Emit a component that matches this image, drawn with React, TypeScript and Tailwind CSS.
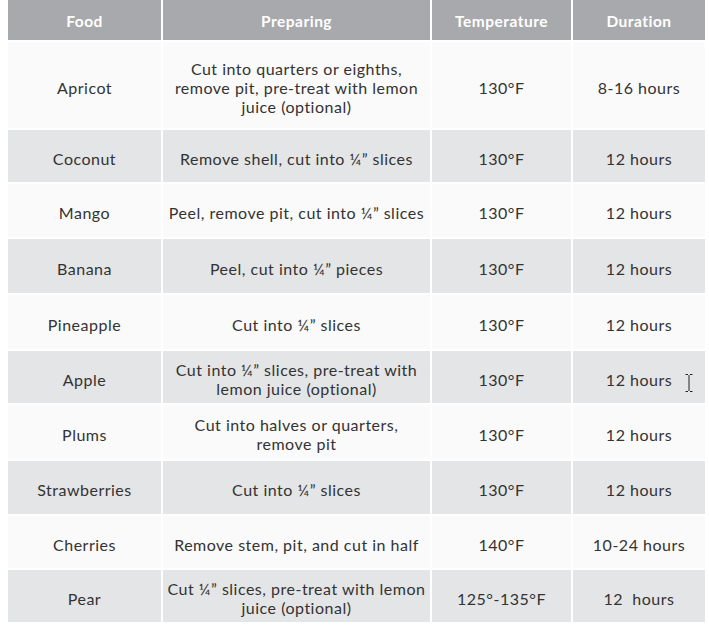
const rows: { food: string; prep: string[]; temp: string; dur: string; h: string }[] = [
  { food: "Apricot", prep: ["Cut into quarters or eighths,", "remove pit, pre-treat with lemon", "juice (optional)"], temp: "130°F", dur: "8-16 hours", h: "h-[86px]" },
  { food: "Coconut", prep: ["Remove shell, cut into ¼” slices"], temp: "130°F", dur: "12 hours", h: "h-[52px]" },
  { food: "Mango", prep: ["Peel, remove pit, cut into ¼” slices"], temp: "130°F", dur: "12 hours", h: "h-[53px]" },
  { food: "Banana", prep: ["Peel, cut into ¼” pieces"], temp: "130°F", dur: "12 hours", h: "h-[54px]" },
  { food: "Pineapple", prep: ["Cut into ¼” slices"], temp: "130°F", dur: "12 hours", h: "h-[54px]" },
  { food: "Apple", prep: ["Cut into ¼” slices, pre-treat with", "lemon juice (optional)"], temp: "130°F", dur: "12 hours", h: "h-[52px]" },
  { food: "Plums", prep: ["Cut into halves or quarters,", "remove pit"], temp: "130°F", dur: "12 hours", h: "h-[54px]" },
  { food: "Strawberries", prep: ["Cut into ¼” slices"], temp: "130°F", dur: "12 hours", h: "h-[53px]" },
  { food: "Cherries", prep: ["Remove stem, pit, and cut in half"], temp: "140°F", dur: "10-24 hours", h: "h-[52px]" },
  { food: "Pear", prep: ["Cut ¼” slices, pre-treat with lemon", "juice (optional)"], temp: "125°-135°F", dur: "12  hours", h: "h-[52px]" },
];

function Cell({ children, bg, h }: { children: React.ReactNode; bg: string; h: string }) {
  return (
    <div className={`${bg} ${h} flex flex-col items-center justify-center whitespace-pre pt-[4px] text-center`}>
      {children}
    </div>
  );
}

export default function App() {
  return (
    <div className="min-h-screen bg-white font-['Lato','Noto_Sans',sans-serif] text-[16px] leading-[19px] tracking-[0.5px] text-[#333]">
      <div className="relative ml-2 grid w-[697px] grid-cols-[153px_267px_139px_132px] gap-[2px]">
        {["Food", "Preparing", "Temperature", "Duration"].map((t) => (
          <div key={t} className="flex h-[40px] items-center justify-center bg-[#a8a9ac] pt-[3px] text-[15.5px] font-bold tracking-[0.5px] text-white">
            {t}
          </div>
        ))}
        {rows.map((r, i) => {
          const bg = i % 2 === 0 ? "bg-[#fafafa]" : "bg-[#e4e5e7]";
          return [
            <Cell key={r.food + "f"} bg={bg} h={r.h}>{r.food}</Cell>,
            <Cell key={r.food + "p"} bg={bg} h={r.h}>
              {r.prep.map((line) => (
                <span key={line}>{line}</span>
              ))}
            </Cell>,
            <Cell key={r.food + "t"} bg={bg} h={r.h}>{r.temp}</Cell>,
            <Cell key={r.food + "d"} bg={bg} h={r.h}>{r.dur}</Cell>,
          ];
        })}
        <svg className="absolute left-[676px] top-[373px]" width="10" height="20" viewBox="0 0 10 20" fill="none" stroke="#222" strokeWidth="1">
          <path d="M1.5 1.5h2.5M6 1.5H8.5M5 2v16M1.5 18.5h2.5M6 18.5h2.5" />
        </svg>
      </div>
    </div>
  );
}
